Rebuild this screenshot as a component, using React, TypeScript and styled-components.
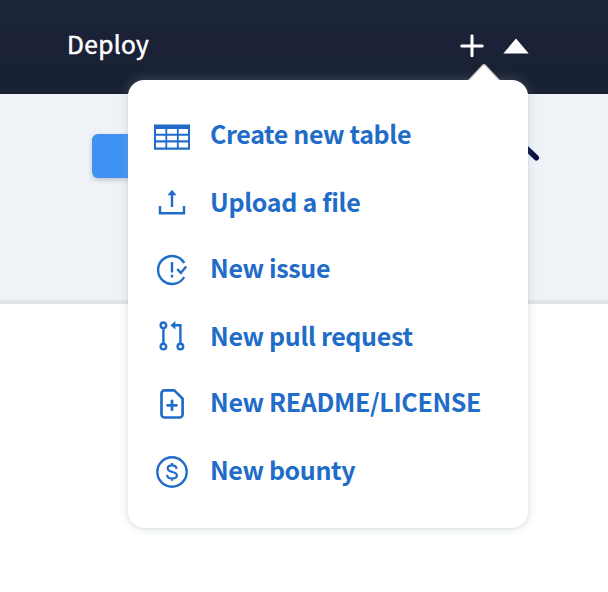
import React from 'react';
import styled, { createGlobalStyle } from 'styled-components';

const GlobalStyle = createGlobalStyle`
  *, *::before, *::after { box-sizing: border-box; }
  body {
    margin: 0;
    overflow: hidden;
    background: #fff;
    font-family: 'Source Sans Pro', 'Noto Sans CJK SC', sans-serif;
  }
`;

const Page = styled.div`
  position: relative;
  width: 608px;
  height: 592px;
  overflow: hidden;
  background: #fff;
`;

const Navbar = styled.header`
  display: flex;
  align-items: center;
  height: 94px;
  padding: 0 79px 4px 67px;
  background: linear-gradient(#1c273b, #1b2238 40%, #182132);
  color: #fff;
`;

const NavLink = styled.a`
  flex: 1;
  font-size: 24.5px;
  line-height: 36px;
  letter-spacing: 0.35px;
  padding-bottom: 2px;
  -webkit-text-stroke: 0.5px #fff;
`;

const NavActions = styled.div`
  display: flex;
  align-items: center;
  gap: 19px;
  height: 26px;

  svg { display: block; }
  svg + svg { margin-top: 2px; }
`;

const RepoBar = styled.section`
  display: flex;
  justify-content: space-between;
  align-items: flex-start;
  height: 210px;
  padding: 40px 68px 0 92px;
  background: #eff3f8;
  border-bottom: 4px solid #dfe4e8;
`;

const ActionButton = styled.button`
  width: 120px;
  height: 44px;
  border: 0;
  border-radius: 6px;
  background: #3d92f2;
  box-shadow: 0 2px 5px rgba(0, 0, 0, 0.2);
`;

const Menu = styled.nav`
  position: absolute;
  top: 80px;
  left: 128px;
  width: 400px;
  height: 448px;
  padding: 38px 26px 0;
  border-radius: 16px;
  background: #fff;
  box-shadow: 0 0 12px rgba(160, 180, 180, 0.3), 0 1px 3px rgba(50, 70, 70, 0.12);
`;

const MenuArrow = styled.svg`
  position: absolute;
  top: -17px;
  right: 27px;
`;

const MenuItem = styled.a`
  display: flex;
  gap: 20px;
  height: 36px;
  margin-bottom: 32px;
  color: #206cc8;

  &:nth-of-type(even) { margin-bottom: 30px; }
`;

const Label = styled.span<{ $tracking: number }>`
  font-size: 25px;
  font-weight: 600;
  line-height: 36px;
  margin-top: -3px;
  letter-spacing: ${({ $tracking }) => $tracking}px;
  white-space: nowrap;
`;

const Icon = styled.svg.attrs({ viewBox: '0 0 36 36', width: 36, height: 36, fill: 'none', stroke: 'currentColor' })`
  display: block;
  flex: none;
`;

const TableIcon = () => (
  <Icon>
    <path
      fill="currentColor"
      stroke="none"
      fillRule="evenodd"
      d="M0 6.4h36v25.3H0zM2 11v4.7h9.4V11zm11.2 0v4.7h9.7V11zm11.5 0v4.7H34V11zM2 17.8v4.4h9.4v-4.4zm11.2 0v4.4h9.7v-4.4zm11.5 0v4.4H34v-4.4zM2 24.6v4.9h9.4v-4.9zm11.2 0v4.9h9.7v-4.9zm11.5 0v4.9H34v-4.9z"
    />
  </Icon>
);

const UploadIcon = () => (
  <Icon strokeWidth="2.4">
    <path d="M6 20v7.3h24V20M18 21V6" />
    <path fill="currentColor" stroke="none" d="M18 3.8l4.5 5.4h-9z" />
  </Icon>
);

const IssueIcon = () => (
  <Icon strokeWidth="2.4">
    <path d="M30.2 11A14 14 0 1 0 30.2 25" />
    <path d="M18 10v10.5M18 22.8v2.6" />
    <path d="M23.3 17l3.5 4 5.4-6.5" />
  </Icon>
);

const PullRequestIcon = () => (
  <Icon strokeWidth="2.4">
    <circle cx="9.4" cy="5.3" r="2.8" />
    <circle cx="9.4" cy="26.6" r="2.8" />
    <circle cx="26.4" cy="26.6" r="2.8" />
    <path d="M9.4 8V24M26.4 24V5.2H20" />
    <path fill="currentColor" stroke="none" d="M16.4 5.2l5-4.2v8.4z" />
  </Icon>
);

const FileIcon = () => (
  <Icon strokeWidth="2.7" strokeLinejoin="round" strokeLinecap="round">
    <path d="M10.5 4.4h9.8l8.3 8.2v15.9a3 3 0 0 1-3 3H10.5a3 3 0 0 1-3-3V7.4a3 3 0 0 1 3-3z" />
    <path d="M18 14.8v9M13.5 19.3h9" />
  </Icon>
);

const BountyIcon = () => (
  <Icon>
    <circle cx="18" cy="18" r="14.7" strokeWidth="2.4" />
    <path
      strokeWidth="2.2"
      d="M18 8.9v3M18 23.8v3M22.6 14.8c-.3-2.2-2-3.4-4.5-3.4-2.7 0-4.4 1.3-4.4 3.2 0 4.5 9.2 2.2 9.2 6.6 0 2-1.9 3.3-4.8 3.3s-4.8-1.3-5.1-3.6"
    />
  </Icon>
);

const items = [
  { label: 'Create new table', icon: TableIcon, tracking: -0.35 },
  { label: 'Upload a file', icon: UploadIcon, tracking: -0.3 },
  { label: 'New issue', icon: IssueIcon, tracking: -0.34 },
  { label: 'New pull request', icon: PullRequestIcon, tracking: -0.33 },
  { label: 'New README/LICENSE', icon: FileIcon, tracking: -0.34 },
  { label: 'New bounty', icon: BountyIcon, tracking: -0.38 },
];

export default function App() {
  return (
    <>
      <GlobalStyle />
      <Page>
        <Navbar>
          <NavLink>Deploy</NavLink>
          <NavActions>
            <svg width="24" height="24" viewBox="0 0 24 24" fill="none" stroke="#fff" strokeWidth="3" strokeLinecap="round">
              <path d="M12 2.8v20M1.8 12.9h20.4" />
            </svg>
            <svg width="26" height="16" viewBox="0 0 26 16" fill="#fff">
              <path d="M13 .5L25.7 15.6H.3z" />
            </svg>
          </NavActions>
        </Navbar>
        <RepoBar>
          <ActionButton aria-label="Action" />
          <svg width="32" height="28" viewBox="0 0 32 28" fill="none" stroke="#000b40" strokeWidth="5.4" strokeLinecap="round">
            <path d="M16 12l12.3 11.8" />
          </svg>
        </RepoBar>
        <Menu>
          <MenuArrow width="34" height="21" viewBox="0 0 34 21">
            <path d="M1 17L14.8 2.2Q17 0 19.2 2.2L33 17z" fill="#ccc" />
            <path d="M2 18L15.5 3.4Q17 1.8 18.5 3.4L32 18v3H2z" fill="#fff" />
          </MenuArrow>
          {items.map(({ label, icon: ItemIcon, tracking }) => (
            <MenuItem key={label}>
              <ItemIcon />
              <Label $tracking={tracking}>{label}</Label>
            </MenuItem>
          ))}
        </Menu>
      </Page>
    </>
  );
}
